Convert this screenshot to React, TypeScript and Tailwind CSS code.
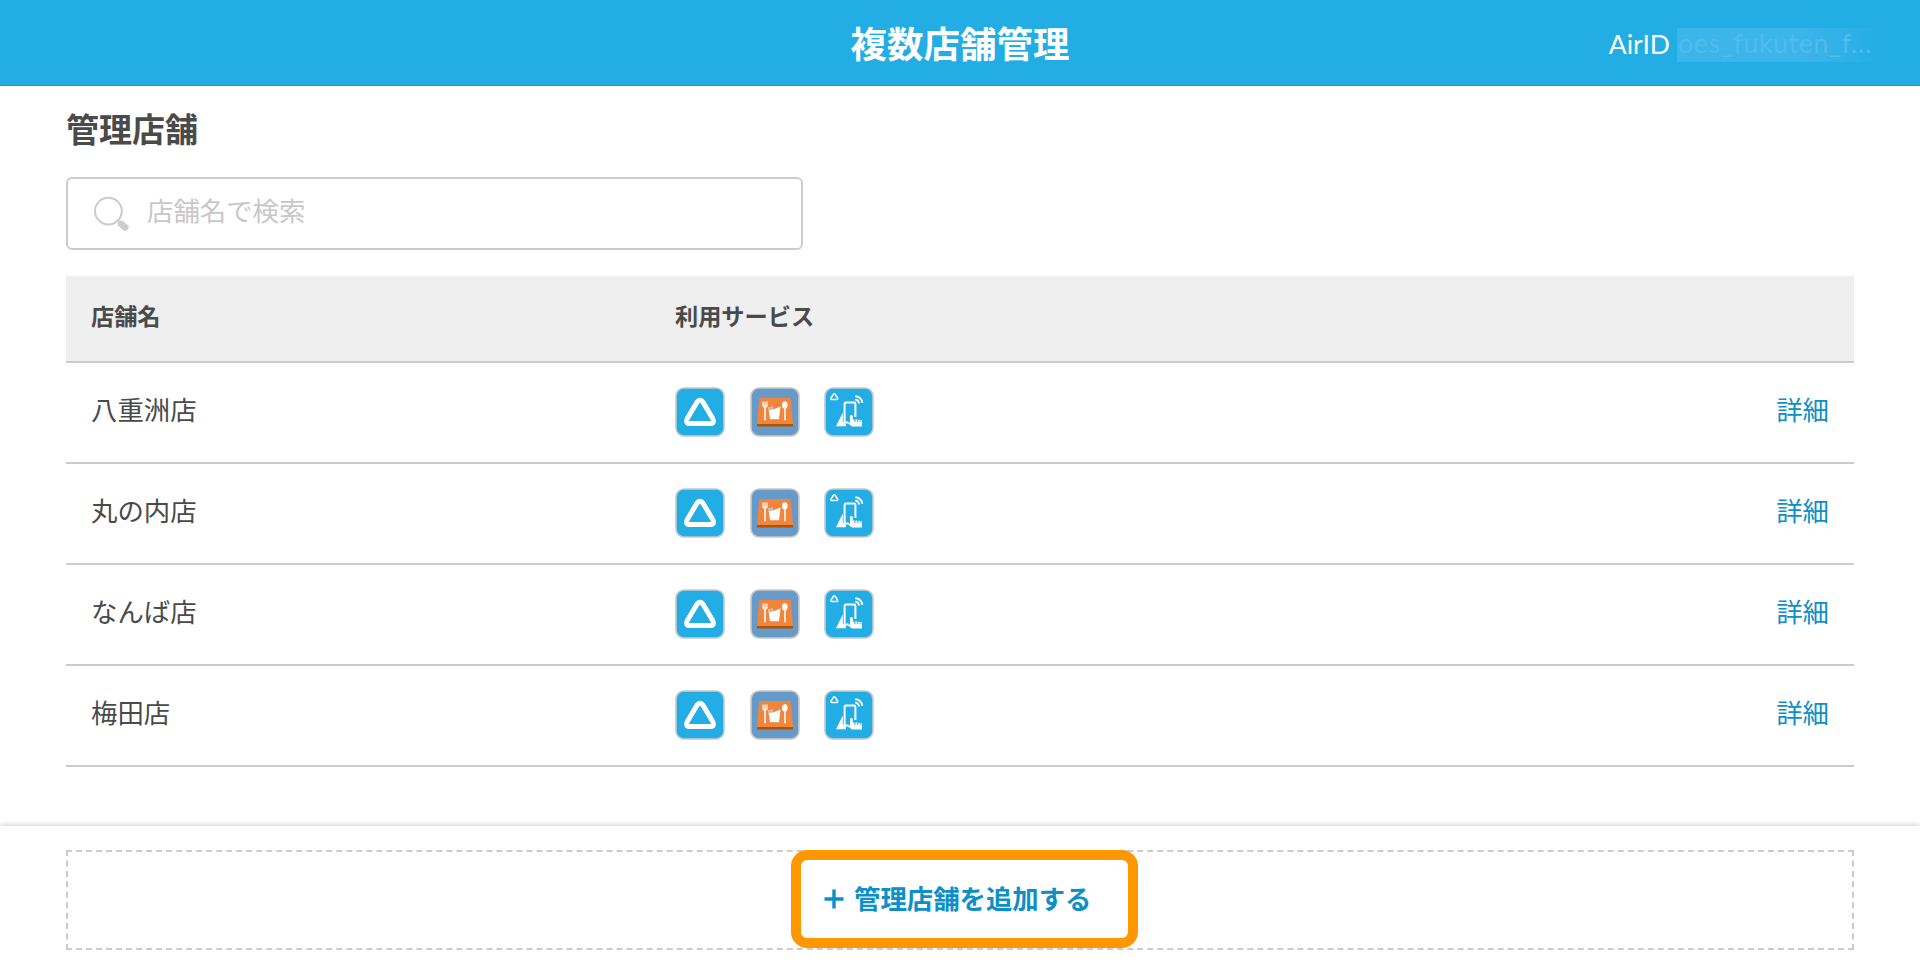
interface Store {
  id: number;
  name: string;
}

const stores: Store[] = [
  { id: 1, name: "八重洲店" },
  { id: 2, name: "丸の内店" },
  { id: 3, name: "なんば店" },
  { id: 4, name: "梅田店" },
];

const iconClass = "block size-[50px]";

function RegisterIcon() {
  return (
    <svg viewBox="0 0 50 50" className={iconClass}>
      <rect x="1" y="1" width="48" height="48" rx="8" fill="#22ade5" stroke="#cbc9c8" strokeWidth="1.6" />
      <path
        d="M21.8 15.5 12.3 31.5Q10 36.6 15 36.6H35Q40 36.6 37.7 31.5L28.2 15.5Q25 10.8 21.8 15.5Z"
        fill="none"
        stroke="#fff"
        strokeWidth="5"
        strokeLinejoin="round"
      />
    </svg>
  );
}

function RestaurantIcon() {
  return (
    <svg viewBox="0 0 50 50" className={iconClass}>
      <rect x="1" y="1" width="48" height="48" rx="8" fill="#669bc9" stroke="#cbc9c8" strokeWidth="1.6" />
      <path d="M9.3 11H40.7L43 37H7Z" fill="#f1853b" />
      <path d="M7 37H43V39.5H7Z" fill="#ad5405" />
      {/* fork */}
      <path d="M12.3 14.5V18.5Q12.3 20.5 14 20.8V33.3H16V20.8Q17.8 20.5 17.8 18.5V14.5" fill="#fbe6d8" />
      <path d="M14 14V18M16 14V18" stroke="#f1853b" strokeWidth=".5" />
      {/* napkin */}
      <path d="M18.3 20.5 22.3 19.5 23 22.5 30.5 19.5 29 32.3H20Z" fill="#fff" />
      <path d="M18.3 20.5 22.3 19.5 23 22.5 19 23.2Z" fill="#c4b9b3" />
      {/* spoon */}
      <ellipse cx="34.8" cy="18" rx="2.8" ry="3.7" fill="#fff" />
      <path d="M34 20H35.8L36 33.3H34Z" fill="#fbe6d8" />
    </svg>
  );
}

function MobileOrderIcon() {
  return (
    <svg viewBox="0 0 50 50" className={iconClass}>
      <rect x="1" y="1" width="48" height="48" rx="8" fill="#22ade5" stroke="#cbc9c8" strokeWidth="1.6" />
      <path
        d="M9.3 7.5 7 11.1Q6.6 12.5 7.8 12.5H12.8Q14 12.5 13.6 11.1L11.3 7.5Q10.3 6 9.3 7.5Z"
        fill="none"
        stroke="#fff"
        strokeWidth="1.5"
      />
      <path d="M18.8 25.5V34.5L22 37V39.3H12Z" fill="#fff" />
      <path
        d="M24.5 35.5H21.8Q20.6 35.5 20.6 34.2V16.8Q20.6 15.4 21.8 15.4H30.2Q31.4 15.4 31.4 16.8V30"
        fill="none"
        stroke="#fff"
        strokeWidth="2"
      />
      {/* pointing hand */}
      <path
        d="M26 28.8Q27.4 27 28.8 28.8V32.5H30.4V35H31.4V32.5H33.2V35H34.2V32.8H35.8V35H36.6V33H38V39.5H28L24 36.5 24.6 35.2 26 35.8Z"
        fill="#fff"
      />
      <path
        d="M31.3 9.3A7 7 0 0 1 38.3 16M31.3 12.8A3.6 3.6 0 0 1 35 16.5"
        fill="none"
        stroke="#fff"
        strokeWidth="1.9"
      />
    </svg>
  );
}

function SearchIcon() {
  return (
    <svg viewBox="0 0 36 36" className="block size-9 shrink-0">
      <circle cx="15.4" cy="15.1" r="13.4" fill="none" stroke="#ccc" strokeWidth="2" />
      <path d="M24.4 24 27 26.6" stroke="#ccc" strokeWidth="2" />
      <path d="M28.2 28 32.1 31.3" stroke="#ccc" strokeWidth="6.8" strokeLinecap="round" />
    </svg>
  );
}

function StoreRow({ store }: { store: Store }) {
  return (
    <li className="flex h-[101px] items-center border-b-2 border-[#ccc] px-[25px] pb-[2px]">
      <span className="w-[584px] pb-[5px] text-[26.4px] leading-none">{store.name}</span>
      <div className="flex flex-1 gap-[24.5px]">
        <RegisterIcon />
        <RestaurantIcon />
        <MobileOrderIcon />
      </div>
      <a href="#" className="pb-[5px] text-[26.4px] leading-none text-[#0d8fc7]">
        詳細
      </a>
    </li>
  );
}

export default function App() {
  return (
    <div className="flex h-[975px] flex-col bg-white font-['Noto_Sans_CJK_JP',sans-serif] text-[#4a4a4a]">
      <header className="grid h-[86px] shrink-0 grid-cols-[1fr_auto_1fr] items-center border-b border-[#14a3e0] bg-[#22ade5] text-white">
        <div />
        <h1 className="pt-[2px] text-[36.5px] leading-none font-bold">複数店舗管理</h1>
        <div className="flex items-center justify-end gap-[7px] pt-[4px] pr-[39px] font-['Lato',sans-serif] text-[26.5px] leading-none">
          <span className="pb-[1px]">AirID</span>
          <span className="flex h-[34px] w-[204px] items-center bg-linear-to-r from-[#3db5e9] from-60% to-[#22ade5] pb-[2px] pl-px tracking-[0.7px] whitespace-nowrap text-[#50bced]">
            oes_fukuten_f...
          </span>
        </div>
      </header>

      <main className="flex-1 px-[66px] pt-[25px]">
        <h2 className="text-[33px] leading-[34px] font-bold">管理店舗</h2>
        <label className="mt-[32px] flex h-[73px] w-[737px] items-center gap-[18px] rounded-md border-2 border-[#ccc] pl-[25px]">
          <SearchIcon />
          <input
            type="text"
            placeholder="店舗名で検索"
            className="mb-[8px] h-10 flex-1 text-[26.4px] outline-none placeholder:text-[#c8c8c8]"
          />
        </label>

        <div className="mt-[26px] flex h-[87px] items-center border-b-2 border-[#ccc] bg-[#efefef] px-[25px] text-[23.2px] leading-none font-bold">
          <span className="w-[584px] pb-[5px]">店舗名</span>
          <span className="pb-[5px]">利用サービス</span>
        </div>
        <ul>
          {stores.map((store) => (
            <StoreRow key={store.id} store={store} />
          ))}
        </ul>
      </main>

      <footer className="h-[149px] shrink-0 bg-white px-[66px] pt-[24px] shadow-[0_-2px_4px_rgba(0,0,0,0.15)]">
        <div className="relative flex h-[100px] items-center justify-center border-2 border-dashed border-[#ccc]">
          <button
            type="button"
            className="absolute -top-[2px] left-[723px] flex h-[98px] w-[347px] items-center gap-[10px] rounded-2xl border-[10px] border-[#ff9800] bg-white pl-[23px] text-[26.4px] leading-none font-bold text-[#0d8fc7]"
          >
            <svg viewBox="0 0 20 20" className="size-5 shrink-0">
              <path d="M10 .5V19.5M.5 10H19.5" stroke="#0d8fc7" strokeWidth="3.4" />
            </svg>
            <span className="pb-px whitespace-nowrap">管理店舗を追加する</span>
          </button>
        </div>
      </footer>
    </div>
  );
}
